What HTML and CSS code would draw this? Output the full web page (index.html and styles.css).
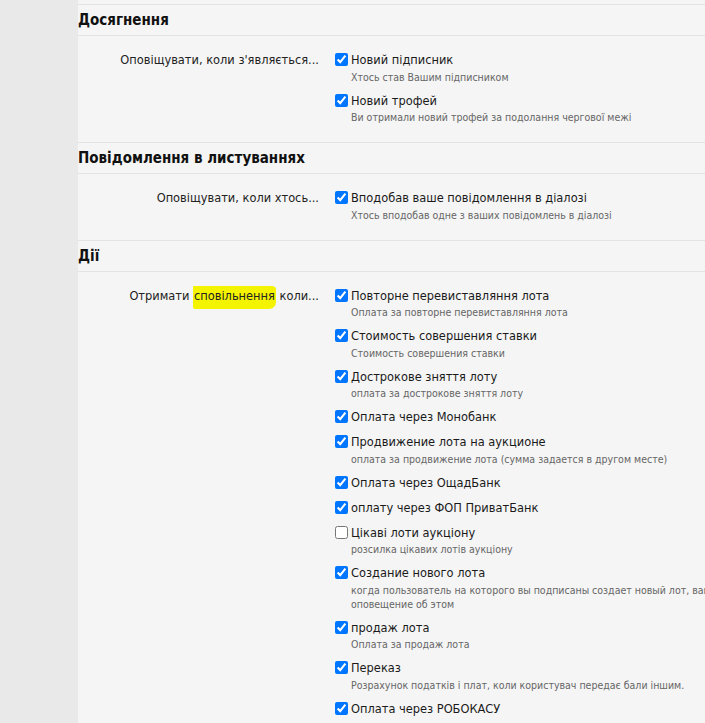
FILE: index.html
```html
<!DOCTYPE html>
<html lang="uk">
<head>
<meta charset="utf-8">
<title>Сповіщення</title>
<link rel="stylesheet" href="styles.css">
</head>
<body>
<div class="page">
  <aside class="side"></aside>
  <main class="main">
    <div class="topgap"></div>

    <section class="section">
      <h2 class="section-title">Досягнення</h2>
      <div class="row">
        <div class="row-label">Оповіщувати, коли з'являється...</div>
        <div class="opts">
          <div class="opt">
            <label class="opt-title"><input type="checkbox" checked>Новий підписник</label>
            <div class="opt-hint">Хтось став Вашим підписником</div>
          </div>
          <div class="opt">
            <label class="opt-title"><input type="checkbox" checked>Новий трофей</label>
            <div class="opt-hint">Ви отримали новий трофей за подолання чергової межі</div>
          </div>
        </div>
      </div>
    </section>

    <section class="section">
      <h2 class="section-title">Повідомлення в листуваннях</h2>
      <div class="row">
        <div class="row-label">Оповіщувати, коли хтось...</div>
        <div class="opts">
          <div class="opt">
            <label class="opt-title"><input type="checkbox" checked>Вподобав ваше повідомлення в діалозі</label>
            <div class="opt-hint">Хтось вподобав одне з ваших повідомлень в діалозі</div>
          </div>
        </div>
      </div>
    </section>

    <section class="section">
      <h2 class="section-title">Дії</h2>
      <div class="row">
        <div class="row-label">Отримати <span class="mark">сповільнення</span> коли...</div>
        <div class="opts">
          <div class="opt">
            <label class="opt-title"><input type="checkbox" checked>Повторне перевиставляння лота</label>
            <div class="opt-hint">Оплата за повторне перевиставляння лота</div>
          </div>
          <div class="opt">
            <label class="opt-title"><input type="checkbox" checked>Стоимость совершения ставки</label>
            <div class="opt-hint">Стоимость совершения ставки</div>
          </div>
          <div class="opt">
            <label class="opt-title"><input type="checkbox" checked>Дострокове зняття лоту</label>
            <div class="opt-hint">оплата за дострокове зняття лоту</div>
          </div>
          <div class="opt">
            <label class="opt-title"><input type="checkbox" checked>Оплата через Монобанк</label>
          </div>
          <div class="opt">
            <label class="opt-title"><input type="checkbox" checked>Продвижение лота на аукционе</label>
            <div class="opt-hint">оплата за продвижение лота (сумма задается в другом месте)</div>
          </div>
          <div class="opt">
            <label class="opt-title"><input type="checkbox" checked>Оплата через ОщадБанк</label>
          </div>
          <div class="opt">
            <label class="opt-title"><input type="checkbox" checked>оплату через ФОП ПриватБанк</label>
          </div>
          <div class="opt">
            <label class="opt-title"><input type="checkbox">Цікаві лоти аукціону</label>
            <div class="opt-hint">розсилка цікавих лотів аукціону</div>
          </div>
          <div class="opt">
            <label class="opt-title"><input type="checkbox" checked>Создание нового лота</label>
            <div class="opt-hint">когда пользователь на которого вы подписаны создает новый лот, вам приходит оповещение об этом</div>
          </div>
          <div class="opt">
            <label class="opt-title"><input type="checkbox" checked>продаж лота</label>
            <div class="opt-hint">Оплата за продаж лота</div>
          </div>
          <div class="opt">
            <label class="opt-title"><input type="checkbox" checked>Переказ</label>
            <div class="opt-hint">Розрахунок податків і плат, коли користувач передає бали іншим.</div>
          </div>
          <div class="opt">
            <label class="opt-title"><input type="checkbox" checked>Оплата через РОБОКАСУ</label>
          </div>
        </div>
      </div>
    </section>
  </main>
</div>
</body>
</html>
```

FILE: styles.css
```css
html, body {
  margin: 0;
  padding: 0;
  background: #f5f5f5;
  overflow: hidden;
}
body {
  font-family: "DejaVu Sans Condensed", "DejaVu Sans", sans-serif;
  color: #1e1e1e;
}
.page {
  display: flex;
  min-height: 723px;
  width: 820px;
}
.side {
  width: 78px;
  flex: none;
  background: #e9e9e9;
}
.main {
  flex: 1;
  background: #f5f5f5;
}
.topgap {
  height: 4px;
  border-bottom: 1px solid #e3e3e3;
}
.section {
  border-bottom: 1px solid #e3e3e3;
}
.section-title {
  margin: 0;
  height: 30px;
  line-height: 30px;
  font-size: 15px;
  font-weight: bold;
  color: #111;
  border-bottom: 1px solid #e3e3e3;
}
.row {
  display: grid;
  grid-template-columns: 241px 1fr;
  column-gap: 16px;
  padding: 15px 0 10px;
}
.row-label {
  text-align: right;
  font-size: 12.7px;
  line-height: 17px;
  color: #222;
}
.mark {
  background: #f4f400;
  border-radius: 1px 4px 7px 2px;
  padding: 2px 1px 6px;
}
.opts {
  display: flex;
  flex-direction: column;
  max-width: 440px;
}
.opt {
  margin-bottom: 8px;
}
.opt-title {
  display: flex;
  align-items: center;
  font-size: 12.7px;
  line-height: 17px;
  color: #1a1a1a;
}
.opt-title input {
  width: 13px;
  height: 13px;
  margin: 0 3px 0 0;
  flex: none;
}
.opt-hint {
  margin-top: 1.5px;
  padding-left: 16px;
  font-size: 10.5px;
  line-height: 14px;
  color: #666;
}
```
